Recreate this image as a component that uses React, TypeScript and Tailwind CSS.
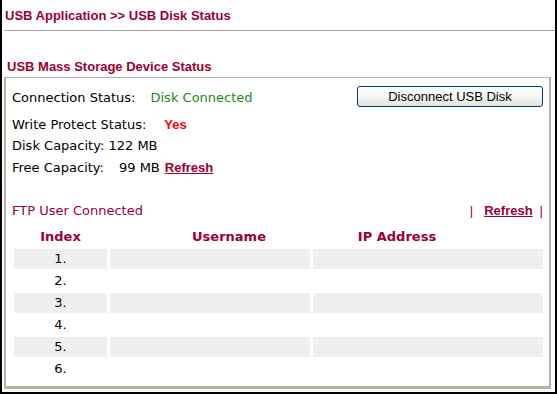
import React from "react";

const rows = ["1.", "2.", "3.", "4.", "5.", "6."];

const App = () => {
  return (
    <div className="w-[557px] h-[394px] bg-white border-l-2 border-r-2 border-b-2 border-black overflow-hidden font-['DejaVu_Sans',sans-serif] text-[13px] text-black">
      {/* page title */}
      <div className="h-[30px] pl-[3px] pt-[2px] flex items-center font-['Liberation_Sans',Arial,sans-serif] font-bold text-[#990033]">
        USB Application &gt;&gt; USB Disk Status
      </div>
      <div className="ml-[2px] h-px bg-[#aca899]" />

      <div className="mt-[28px] h-[16px] pl-[5px] flex items-center font-['Liberation_Sans',Arial,sans-serif] font-bold text-[#990033]">
        USB Mass Storage Device Status
      </div>

      {/* status box */}
      <div className="mt-[2px] ml-[2px] mr-[4px] border-t border-l-2 border-r-2 border-b-[3px] border-[#b5b2a2] pl-[6px] pr-[6px] pt-[6px] pb-[7px]">
        <div className="h-[27px] flex items-center justify-between">
          <div className="flex items-center">
            <span>Connection Status:</span>
            <span className="ml-[15px] text-[#238b23]">Disk Connected</span>
          </div>
          <button className="mb-[2px] w-[186px] h-[21px] rounded-[3px] border border-[#003c74] bg-gradient-to-b from-white via-[#f7f7f4] to-[#e3e2da] font-['Liberation_Sans',Arial,sans-serif] text-[13px] text-black leading-none">
            Disconnect USB Disk
          </button>
        </div>
        <div className="mt-[3px] h-[21px] flex items-center">
          <span>Write Protect Status:</span>
          <span className="ml-[18px] font-['Liberation_Sans',Arial,sans-serif] font-bold text-[#ff0000]">Yes</span>
        </div>
        <div className="h-[22px] flex items-center">Disk Capacity: 122 MB</div>
        <div className="h-[22px] flex items-center">
          <span>Free Capacity:</span>
          <span className="ml-[15px]">99 MB</span>
          <a href="#" className="ml-[5px] font-['Liberation_Sans',Arial,sans-serif] font-bold text-[#990033] underline">
            Refresh
          </a>
        </div>

        {/* ftp users */}
        <div className="mt-[21px] h-[22px] flex items-center justify-between">
          <span className="text-[#990033]">FTP User Connected</span>
          <div className="flex items-center font-['Liberation_Sans',Arial,sans-serif] text-[#990033]">
            <span>|</span>
            <a href="#" className="ml-[11px] font-bold underline">Refresh</a>
            <span className="ml-[7px]">|</span>
          </div>
        </div>

        <div className="ml-[2px] mt-[5px]">
          <div className="h-[20px] grid grid-cols-[93px_241px_98px] items-center font-bold text-[#990033]">
            <div className="text-center">Index</div>
            <div className="text-center pl-[3px]">Username</div>
            <div className="text-center">IP Address</div>
          </div>
          <div className="mt-[2px] flex flex-col gap-[2px]">
            {rows.map((r, i) => (
              <div key={r} className="h-[20px] grid grid-cols-[93px_200px_230px] gap-x-[3px]">
                <div className={"flex items-center justify-center " + (i % 2 === 0 ? "bg-[#efefef]" : "")}>{r}</div>
                <div className={i % 2 === 0 ? "bg-[#efefef]" : ""} />
                <div className={i % 2 === 0 ? "bg-[#efefef]" : ""} />
              </div>
            ))}
          </div>
        </div>
      </div>
    </div>
  );
};

export default App;
